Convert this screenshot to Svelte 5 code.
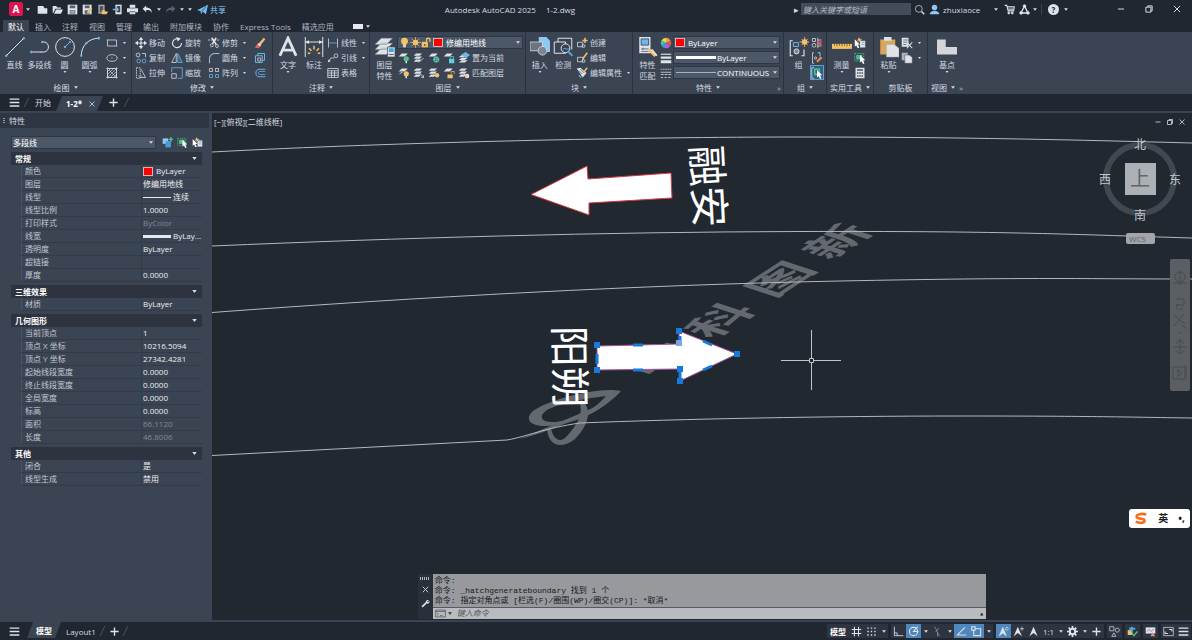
<script>
	const B = '#6cb8ea';
	const Y = '#f2c268';
	const G = '#4fc28b';
	const W = '#dfe3e8';

	const layers = `<path d="M1 7l4-3h8l-4 3zM1 10.500l4-3h8l-4 3zM1 14l4-3h8l-4 3z" fill="${W}" stroke="none"/>`;
	const sheet = `<path d="M1 6l4-4h8l-4 4z" fill="${W}" stroke="none"/>`;
	const sheets = `<path d="M1 5l3-3h8L9 5zM1 9l3-3h8L9 9zM1 13l3-3h7l-3 3z" fill="${W}" stroke="none"/>`;

	const icons = {
		new: `<path d="M1 3h8l2 3h4v8H1z" fill="${W}" stroke="none"/>`,
		open: `<path d="M1 3h5l2 2h5v2H5l-3 6H1z" fill="${W}" stroke="none"/><path d="M6 8h10l-3 6H3z" fill="${W}" stroke="none"/>`,
		save: `<path d="M1 1h14v14H1z" fill="${W}" stroke="none"/><path d="M4 2h8v4H4zM4 9h8v5H4z" fill="#56606e" stroke="none"/><path d="M5 11h6M5 13h6" stroke="${W}"/>`,
		saveas: `<path d="M1 1h13v14H1z" fill="${W}" stroke="none"/><path d="M4 2h7v4H4zM4 9h7v5H4z" fill="#56606e" stroke="none"/><path d="M8 13l6-7" stroke="${Y}" stroke-width="3"/>`,
		pageopen: `<path d="M2 1h9v13H2z" fill="#a9aeb6" stroke="none"/><path d="M4 3h5v9H4z" fill="#4c5663" stroke="none"/><path d="M7 9h4l1 2h4l-2 4H7z" fill="${Y}" stroke="none"/>`,
		mobile: `<path d="M5 1h9v14H5z" fill="${W}" stroke="none"/><path d="M7 3h5v9H7z" fill="#36404d" stroke="none"/><path d="M1 8h7M6 5l3 3-3 3" stroke="${B}" stroke-width="2"/>`,
		print: `<path d="M4 1h8v5H4zM0 6h16v6H0zM4 11h8v4H4z" fill="${W}" stroke="none"/><path d="M4 6h8M4 11h8" stroke="#3b4453"/><path d="M5 13h6" stroke="${B}"/>`,
		undo: `<path d="M6 2L1 7l5 5V9c4-1 7 0 8 4 1-5-3-8-8-8z" fill="${W}" stroke="none"/>`,
		redo: `<path d="M10 2l5 5-5 5V9c-4-1-7 0-8 4-1-5 3-8 8-8z" fill="#596371" stroke="none"/>`,
		plane: `<path d="M0 9L16 1l-3 14-5-4-2 4-1-5z" fill="#75bdf0" stroke="none"/><path d="M6 10l7-6-5 7" stroke="#2a6b9d"/>`,
		search: `<circle cx="7" cy="7" r="5"/><path d="M11 11l4 4" stroke-width="2"/>`,
		user: `<circle cx="8" cy="5" r="4" fill="#8fc6f5" stroke="none"/><path d="M1 15c0-7 14-7 14 0z" fill="#8fc6f5" stroke="none"/>`,
		cart: `<path d="M1 2h3l2 8h8l1-6H5" stroke-width="1.500"/><path d="M6 6h8M6 8h8"/><circle cx="7" cy="13" r="1.500" fill="${W}"/><circle cx="12" cy="13" r="1.500" fill="${W}"/>`,
		adesk: `<path d="M8 3L3 13h10z" stroke-width="2"/><circle cx="8" cy="3" r="2" fill="${W}"/><circle cx="3" cy="13" r="2" fill="${W}"/><circle cx="13" cy="13" r="2" fill="${W}"/>`,
		min: `<path d="M3 8h10" stroke-width="1.500"/>`,
		restore: `<path d="M3 5h8v8H3zM6 5V3h7v8h-2" stroke-width="1.500"/>`,
		close: `<path d="M3 3l10 10M13 3L3 13" stroke-width="1.500"/>`,
		menu: `<path d="M1 3h14M1 8h14M1 13h14" stroke-width="2"/>`,
		plus: `<path d="M8 2v12M2 8h12" stroke-width="2"/>`,
		line: `<path d="M1 15L15 1"/><circle cx="1" cy="15" r=".7" fill="${B}" stroke="${B}"/><circle cx="15" cy="1" r=".7" fill="${B}" stroke="${B}"/>`,
		pline: `<path d="M1 12h10c5 0 5-8 0-8H9"/><circle cx="1" cy="12" r=".7" fill="${B}" stroke="${B}"/><circle cx="9" cy="12" r=".5" fill="${B}" stroke="${B}"/><circle cx="10" cy="4" r=".5" fill="${B}" stroke="${B}"/>`,
		circle: `<circle cx="8" cy="8" r="7.500"/><path d="M8 8l4-4" stroke="${B}"/><circle cx="8" cy="8" r=".6" fill="${B}" stroke="${B}"/><circle cx="12" cy="4" r=".5" fill="${B}" stroke="${B}"/>`,
		arc: `<path d="M1 15C1 7 7 1 15 1"/><circle cx="15" cy="1" r=".8" fill="${B}" stroke="${B}"/><circle cx="5" cy="5" r=".6" fill="${B}" stroke="${B}"/><circle cx="1" cy="15" r=".6" fill="${B}" stroke="${B}"/>`,
		rect: `<path d="M2 4h12v8H2z"/><path d="M1 3h2v2H1zM13 11h2v2h-2z" fill="${B}" stroke="none"/>`,
		ellipse: `<ellipse cx="8" cy="8" rx="7" ry="4.500"/><circle cx="8" cy="8" r="1" fill="${B}" stroke="none"/>`,
		hatch: `<path d="M2 2h12v12H2z"/><path d="M0 2h16M0 14h16M2 0v16M14 0v16" stroke-width=".6"/><path d="M2 6l4-4M2 10l8-8M2 14L14 2M6 14l8-8M10 14l4-4M4 4l9 9" stroke-width=".8"/>`,
		move: `<path d="M8 1v14M1 8h14" stroke-width="1.500"/><path d="M8 0l3 4H5zM8 16l3-4H5zM0 8l4-3v6zM16 8l-4-3v6z" fill="${W}" stroke="none"/>`,
		rotate: `<path d="M11 3a6 6 0 1 0 3 5" stroke-width="1.500"/><path d="M7 0l6 2-4 4z" fill="${W}" stroke="none"/>`,
		trim: `<path d="M0 4h16" stroke-dasharray="3 1"/><path d="M5 1l6 9M11 1L6 9" stroke-width="2"/><circle cx="5" cy="11" r="2"/><circle cx="12" cy="12" r="2"/>`,
		erase: `<path d="M5 10L13 1l2 2-7 9z" fill="${Y}" stroke="none"/><path d="M1 14l4-5 4 3-3 3z" fill="#e9635f" stroke="none"/><path d="M5 9l4 3" stroke="${W}" stroke-width="2"/>`,
		copy: `<circle cx="4" cy="4" r="2.500"/><path d="M9 2h5v5"/><circle cx="5" cy="12" r="2.500" stroke="${B}"/><circle cx="12" cy="12" r="2.500" stroke="${B}"/>`,
		mirror: `<path d="M7 2v12H1z"/><path d="M9 2v12h6z" stroke="${B}" fill="#35627f"/>`,
		fillet: `<path d="M2 15V9c0-4 3-7 7-7h6"/><path d="M2 8c0-3 3-6 6-6" stroke="${B}"/>`,
		explode: `<path d="M2 5h9v9H2zM5 5V2h9v9h-3" stroke="${B}" stroke-width="1.300"/><path d="M5 8h4v4H5z"/>`,
		stretch: `<path d="M2 1h5v14H2z" stroke-dasharray="2 1"/><path d="M8 3l6 11H6"/><path d="M4 12h6" stroke="${B}"/>`,
		scale: `<path d="M1 7V1h14v14H9" stroke="${B}"/><path d="M1 9h6v6H1z"/>`,
		array: `<path d="M2 2h4v4H2zM10 2h4v4h-4z"/><path d="M2 10h4v4H2zM10 10h4v4h-4z" stroke="${B}"/>`,
		offset: `<path d="M15 3H7c-6 0-6 10 0 10h8" stroke="${B}" stroke-width="1.300"/><path d="M15 6H8c-3 0-3 4 0 4h7" stroke="${B}"/>`,
		text: `<path d="M1.500 15L8 1l6.500 14M4 10.500h8" stroke-width="2.300"/>`,
		dim: `<path d="M1 0v16M15 0v16M1 4h14" /><path d="M1 4l3-1.500v3zM15 4l-3-1.500v3z" fill="${W}" stroke="none"/><path d="M8 7v3M4 9l2 2M12 9l-2 2M3 13h2M13 13h-2" stroke="${Y}" stroke-width="1.200"/>`,
		linear: `<path d="M2 2v12M14 2v12"/><path d="M3 8h10" stroke="${B}"/>`,
		leader: `<path d="M2 13l3-5h5"/><circle cx="12" cy="5" r="2.500"/><path d="M1 14l4-2-3-2z" fill="${W}" stroke="none"/>`,
		table: `<path d="M1 2h14v12H1zM1 5h14M1 8h14M1 11h14M6 5v9M10 5v9"/>`,
		layerprops: `<path d="M0 6l5-5h9L9 6zM0 10l5-5h9l-5 5zM0 14l5-5h9l-5 5z" fill="${W}" stroke="#7d8795" stroke-width=".4"/><path d="M10 8h6v8h-6z" fill="${W}" stroke="#3b4453" stroke-width=".5"/><path d="M11 9h4v3h-4z" fill="#4aa7e3" stroke="none"/><path d="M11 14h4"  stroke="#5c6673"/>`,
		bulb: `<circle cx="8" cy="6" r="5" fill="${Y}" stroke="none"/><path d="M6 10h4v5H6z" fill="#e8d9b0" stroke="none"/>`,
		sun: `<circle cx="8" cy="8" r="4" fill="${Y}" stroke="none"/><path d="M8 0v16M0 8h16M2.500 2.500l11 11M13.500 2.500l-11 11" stroke="${Y}"/>`,
		lock: `<path d="M1 7h9v8H1z" fill="${Y}" stroke="none"/><path d="M8 7V4c0-3 5-3 5 0v3" stroke="${Y}" stroke-width="2"/><path d="M5.500 10v3" stroke="#4d3b12" stroke-width="1.500"/>`,
		loff: sheet + `<circle cx="11" cy="9" r="3.500" fill="${G}" stroke="none"/><path d="M10 12h2v3h-2z" fill="${W}" stroke="none"/>`,
		liso: sheets + `<path d="M8 14l6-6"/>`,
		lfreeze: sheet + `<circle cx="11" cy="10" r="3" stroke="${G}" stroke-width="2"/><path d="M7 10h8M11 6v8" stroke="${B}"/>`,
		llock: sheet + `<path d="M8 9h7v6H8z" fill="#5fd0d8" stroke="none"/><path d="M10 9V6h4v3" stroke="#5fd0d8"/>`,
		lcur: layers + `<path d="M4 4l6-4 6 4-5 4z" fill="${B}" stroke="none"/>`,
		lon: sheet + `<circle cx="11" cy="9" r="3.500" fill="${Y}" stroke="none"/><path d="M1 10l3-3h3M10 12h2v3h-2z" fill="${W}" stroke="none"/>`,
		luniso: sheets + `<path d="M9 8l5 6M11 14h3v-3"/>`,
		lthaw: sheets + `<circle cx="12" cy="11" r="3" fill="${Y}" stroke="none"/>`,
		lunlock: sheet + `<path d="M6 10h7v5H6z" fill="${Y}" stroke="none"/><path d="M11 9V6h4v3" stroke="${Y}"/>`,
		lmatch: sheets + `<circle cx="12" cy="12" r="3" fill="${W}" stroke="none"/><path d="M8 9l4 4" stroke="${Y}" stroke-width="2"/>`,
		insert: `<path d="M7 0h6l3 3v9H7z" fill="#8cc8f2" stroke="none"/><path d="M0 4h10v7H0z" fill="#6c7480" stroke="${W}" stroke-width=".6"/><circle cx="10" cy="11" r="3.500" fill="#7d8590" stroke="${W}" stroke-width=".6"/>`,
		detect: `<path d="M1 4h9v9H1zM4 4V1h11v9" stroke-width=".8"/><circle cx="10" cy="9" r="3.500" fill="#334455" stroke="${W}"/><path d="M8 10c2-2 3 1 5-1" stroke="${B}"/><path d="M12.500 12l3 3" stroke="#4aa7e3" stroke-width="1.500"/>`,
		bcreate: `<path d="M2 7h7v6H2z"/><circle cx="10" cy="12" r="2"/><path d="M12 1v7M8.500 4.500h7" stroke="${Y}" stroke-width="2"/>`,
		bedit: `<path d="M2 7h7v6H2z"/><circle cx="10" cy="12" r="2"/><path d="M9 9l6-8" stroke="${Y}" stroke-width="2"/>`,
		battr: `<path d="M1 2l5-1 8 7-5 6z" fill="${W}" stroke="none"/><path d="M4 5l4 4M6 3l5 5" stroke="#3b4453"/><path d="M10 7l5-6" stroke="${Y}" stroke-width="2"/><path d="M4 11l3 3" stroke="${G}" stroke-width="2"/>`,
		match: `<path d="M1 0h9v13H1z" fill="${W}" stroke="none"/><path d="M2.500 1.500h6v5h-6z" fill="#6cb8ea" stroke="#2d3642" stroke-width=".6"/><path d="M2.500 9.500h6M4 8.500v2M2.500 11.500h6" stroke="#5c6673" stroke-width=".7"/><path d="M8 9l3 1 4 4-2 2-4-4z" fill="${Y}" stroke="none"/><path d="M11 10l4 5" stroke="${W}" stroke-width="1.500"/>`,
		wheel: `<path d="M8 8V1a7 7 0 0 1 6 4z" fill="#f5a23c" stroke="none"/><path d="M8 8l6-3.500a7 7 0 0 1 0 7z" fill="#e25555" stroke="none"/><path d="M8 8l6 3.500A7 7 0 0 1 8 15z" fill="#b35fd0" stroke="none"/><path d="M8 8v7a7 7 0 0 1-6-3.500z" fill="#4b8df0" stroke="none"/><path d="M8 8l-6 3.500a7 7 0 0 1 0-7z" fill="#41c49c" stroke="none"/><path d="M8 8L2 4.500A7 7 0 0 1 8 1z" fill="#d7dc55" stroke="none"/>`,
		weights: `<path d="M1 3h14" stroke-width="1.500"/><path d="M1 7.500h14" stroke-width="3"/><path d="M1 13h14" stroke-width="4"/>`,
		dashes: `<path d="M1 3h14" stroke-dasharray="2 1"/><path d="M1 7h14"/><path d="M1 10h14" stroke-dasharray="4 1"/><path d="M1 14h14" stroke-dasharray="3 2"/>`,
		group: `<path d="M3 3H1v12h2M10 15h2v-5" stroke-width=".9"/><path d="M3.500 4.500h4v3h-4z" stroke="${B}"/><circle cx="6" cy="11.500" r="2" fill="#7d8590"/><circle cx="12.500" cy="4" r="2.200" fill="${Y}" stroke="none"/><path d="M12.500 0v8M8.500 4h8M10 1.500l5 5M15 1.500l-5 5" stroke="${Y}" stroke-width=".7"/>`,
		ungroup: `<path d="M2 2h4v4H2z"/><circle cx="4" cy="11" r="2.500"/><path d="M9 1v14M9 4h5M9 12h5"/><path d="M9 6l5 5M14 6l-5 5" stroke="#ee5a52" stroke-width="2"/>`,
		gedit: `<path d="M4 1H2v14h2M9 1h3v5"/><circle cx="6" cy="8" r="1.500"/><path d="M8 13l6-6" stroke="#ef8b50" stroke-width="3"/>`,
		gselect: `<path d="M4 1H1v14h3" stroke="${W}"/><path d="M5 3h6v7H5z" stroke="${G}" stroke-width="2"/><path d="M8 4v10l2-2 2 4 2-1-2-4h3z" fill="#fff" stroke="none"/>`,
		ruler: `<path d="M0 5.500h16v4H0z" fill="${Y}" stroke="none"/><path d="M2 5.500v1.500M4 5.500v2M6 5.500v1.500M8 5.500v2M10 5.500v1.500M12 5.500v2M14 5.500v1.500" stroke="#7a5a1c" stroke-width=".7"/>`,
		quick: `<path d="M8 5h7v9H8z" fill="${W}" stroke="none"/><path d="M10 7h4M10 10h4" stroke="#4aa7e3"/><path d="M1 3v10l2-2 2 4 2-1-2-4h3z" fill="#fff" stroke="none"/><path d="M7 0L4 5h3L5 8l6-5H8z" fill="${Y}" stroke="none"/>`,
		selall: `<path d="M1 2h12v10H1z" stroke="${G}" stroke-dasharray="2 1"/><path d="M3 4h8v6H3z" fill="${G}" stroke="none"/><path d="M8 4v10l2-2 2 4 2-1-2-4h3z" fill="#fff" stroke="none"/>`,
		calc: `<path d="M2 1h12v14H2z" fill="${W}" stroke="none"/><path d="M4 3h8v2H4zM4 7h2v2H4zM7 7h2v2H7zM10 7h2v2h-2zM4 11h2v2H4zM7 11h2v2H7zM10 11h2v2h-2z" fill="#4c5663" stroke="none"/>`,
		paste: `<path d="M1 2h12v12H1z" fill="#d9a65a" stroke="none"/><path d="M4 0h6v3H4z" fill="${W}" stroke="none"/><path d="M6 6h6l4 3v7H6z" fill="${W}" stroke="#aab0b8" stroke-width=".4"/>`,
		cut: `<path d="M1 1h9v12H1z" fill="${W}" stroke="none"/><path d="M3 4h6M3 7h6M3 10h4" stroke="#4c5663"/><path d="M8 7l7 8M15 7l-7 8" stroke="${W}" stroke-width="1.500"/>`,
		copyclip: `<path d="M1 1h8v10H1z" fill="#aeb4bd" stroke="none"/><path d="M5 4h6l4 3v8H5z" fill="${W}" stroke="#3b4453" stroke-width=".6"/>`,
		base: `<path d="M0 2h7v6h9v6H0z" fill="#d3d5d8" stroke="none"/>`,
		pickadd: `<path d="M1 2h8v8H1z" fill="#8cc8f2" stroke="none"/><path d="M5 6h8v9H5z" fill="#4a9bd8" stroke="none"/><path d="M13 0v7M9.500 3.500h7" stroke="${G}" stroke-width="2"/>`,
		terminal: `<path d="M1 3h14v10H1zM1 5h14M3 7l2 2-2 2M7 11h4" stroke="#444a52"/>`,
		wrench: `<path d="M2 14l7-7" stroke="${W}" stroke-width="3"/><path d="M9 8c-2-4 1-7 5-6l-3 3 1 1 3-3c1 4-2 6-6 5z" fill="${W}" stroke="none"/>`,
		grid: `<path d="M5 1v14M11 1v14M1 5h14M1 11h14" stroke-width="1.500"/>`,
		dots: `<path d="M2 3h13M2 8h13M2 13h13" stroke-dasharray="2 3" stroke-width="2"/>`,
		ortho: `<path d="M2 1v13h13M2 10h4v4" stroke-width="1.200"/>`,
		polar: `<circle cx="8" cy="8" r="6" stroke-width="1.500"/><path d="M15 8H8l6-7" stroke-width="1.500"/>`,
		iso: `<path d="M4 1l7 14M10 3L5 9M8 9v6" stroke="#98a1ad"/>`,
		track: `<path d="M2 13L13 2M1 13h14" stroke-width="1.500"/>`,
		snap: `<path d="M4 4h10v10H4z" stroke-width="1.500"/><path d="M1 1h5v5H1z" fill="#4f8cc4" stroke-width="1.500"/>`,
		ann1: `<path d="M2 14L7 2l5 12-5-4z" fill="${W}" stroke="${W}"/><circle cx="13" cy="4" r="2"/>`,
		ann2: `<path d="M1 15L7 1l6 14-6-5z" fill="${W}" stroke="none"/><path d="M13 1v6M10 4h6"/>`,
		ann3: `<path d="M2 15L8 1l6 14-6-5z" fill="${W}" stroke="none"/>`,
		gear: `<circle cx="8" cy="8" r="4" stroke-width="3"/><path d="M8 0v3M8 13v3M0 8h3M13 8h3M2.500 2.500l2 2M11.500 11.500l2 2M13.500 2.500l-2 2M4.500 11.500l-2 2" stroke-width="2.500"/>`,
		shapes: `<path d="M1 1h6v6H1zM4 15l3-5 3 5z"/><circle cx="12" cy="6" r="3"/>`,
		perf: `<path d="M1 6h7v7H1z" fill="${Y}" stroke="none"/><path d="M7 1v8M3 4h9" stroke="#4aa7e3" stroke-width="3"/><path d="M8 11l2 3 5-6" stroke="${G}" stroke-width="2"/>`,
		graph: `<path d="M1 2h14v9H1z" fill="${W}" stroke="none"/><path d="M3 8l3-3 3 3 4-4" stroke="#5c6673"/><path d="M8 15l3-6 4 6z" fill="#ef8b70" stroke="none"/>`,
		full: `<path d="M1 2h14v12H1z"/><path d="M9 5h4v3M7 11H3V8" stroke-width="1.500"/>`
	};

	const quickAccess = ['new', 'open', 'save', 'saveas', 'pageopen', 'mobile', 'print', 'undo'];
	const ribbonTabs = ['默认', '插入', '注释', '视图', '管理', '输出', '附加模块', '协作', 'Express Tools', '精选应用'];

	const sections = [
		{
			title: '常规',
			rows: [
				{ label: '颜色', value: 'ByLayer', mark: 'swatch' },
				{ label: '图层', value: '修编用地线' },
				{ label: '线型', value: '连续', mark: 'thin' },
				{ label: '线型比例', value: '1.0000' },
				{ label: '打印样式', value: 'ByColor', dim: true },
				{ label: '线宽', value: 'ByLay...', mark: 'thick' },
				{ label: '透明度', value: 'ByLayer' },
				{ label: '超链接', value: '' },
				{ label: '厚度', value: '0.0000' }
			]
		},
		{ title: '三维效果', rows: [{ label: '材质', value: 'ByLayer' }] },
		{
			title: '几何图形',
			rows: [
				{ label: '当前顶点', value: '1' },
				{ label: '顶点 X 坐标', value: '10216.5094' },
				{ label: '顶点 Y 坐标', value: '27342.4281' },
				{ label: '起始线段宽度', value: '0.0000' },
				{ label: '终止线段宽度', value: '0.0000' },
				{ label: '全局宽度', value: '0.0000' },
				{ label: '标高', value: '0.0000' },
				{ label: '面积', value: '66.1120', dim: true },
				{ label: '长度', value: '46.8006', dim: true }
			]
		},
		{
			title: '其他',
			rows: [
				{ label: '闭合', value: '是' },
				{ label: '线型生成', value: '禁用' }
			]
		}
	];

	const watermark = [
		{ char: '中', x: 660, y: 359 },
		{ char: '科', x: 720, y: 320 },
		{ char: '图', x: 780, y: 279 },
		{ char: '新', x: 837, y: 241 }
	];

	const grips = [
		[597, 345], [679, 331], [737, 354], [680, 369], [680, 381], [597, 370]
	];

	const statusItems = [
		{ icon: 'grid' },
		{ icon: 'dots', caret: true },
		{ icon: 'ortho', gap: true },
		{ icon: 'polar', on: true, caret: true },
		{ icon: 'iso', caret: true },
		{ icon: 'track', on: true },
		{ icon: 'snap', on: true, caret: true },
		{ icon: 'ann1', on: true, gap: true },
		{ icon: 'ann2' },
		{ icon: 'ann3' },
		{ text: '1:1', caret: true },
		{ icon: 'gear', caret: true },
		{ icon: 'plus' },
		{ icon: 'shapes', gap: true },
		{ icon: 'perf', gap: true },
		{ icon: 'graph', gap: true },
		{ icon: 'full', gap: true },
		{ icon: 'menu' }
	];

	let activeTab = $state('默认');
	let keyword = $state('');
	let command = $state('');
</script>

{#snippet icon(name)}
	<svg class="icon" viewBox="0 0 16 16" aria-hidden="true">{@html icons[name]}</svg>
{/snippet}

{#snippet caret()}
	<svg class="caret" viewBox="0 0 6 4" aria-hidden="true"><path d="M0 0h6L3 4z" /></svg>
{/snippet}

{#snippet big(name, lines, more)}
	<button class="big">
		{@render icon(name)}
		{#each lines as line}<span>{line}</span>{/each}
		{#if more}{@render caret()}{/if}
	</button>
{/snippet}

{#snippet small(name, label, more)}
	<button class="small" aria-label={label || name}>
		{@render icon(name)}
		{#if label}<span>{label}</span>{/if}
		{#if more}{@render caret()}{/if}
	</button>
{/snippet}

{#snippet panelTitle(label, more, launcher)}
	<div class="panel-title">
		<span>{label}</span>
		{#if more}{@render caret()}{/if}
		{#if launcher}<span class="launcher">»</span>{/if}
	</div>
{/snippet}

<div class="app">
	<header class="titlebar">
		<button class="logo" aria-label="菜单">A</button>
		<span class="after-logo">{@render caret()}</span>
		<div class="quick">
			{#each quickAccess as name}
				<button aria-label={name}>{@render icon(name)}</button>
			{/each}
			{@render caret()}
			<button aria-label="redo">{@render icon('redo')}</button>
			{@render caret()}
			{@render caret()}
		</div>
		<button class="share">{@render icon('plane')}<span>共享</span></button>
		<h1><span>Autodesk AutoCAD 2025</span><span>1-2.dwg</span></h1>
		<span class="arrow">▸</span>
		<input class="search" type="text" aria-label="搜索" placeholder="键入关键字或短语" bind:value={keyword} />
		<button class="search-btn" aria-label="搜索按钮">{@render icon('search')}</button>
		<button class="user">{@render icon('user')}<span>zhuxiaoce</span>{@render caret()}</button>
		<button class="tool" aria-label="商店">{@render icon('cart')}</button>
		<button class="tool" aria-label="Autodesk">{@render icon('adesk')}{@render caret()}</button>
		<button class="help" aria-label="帮助"><b>?</b>{@render caret()}</button>
		<div class="window-controls">
			<button aria-label="最小化">{@render icon('min')}</button>
			<button aria-label="还原">{@render icon('restore')}</button>
			<button aria-label="关闭">{@render icon('close')}</button>
		</div>
	</header>

	<nav class="tabs">
		{#each ribbonTabs as tab}
			<button class:active={tab === activeTab} onclick={() => (activeTab = tab)}>{tab}</button>
		{/each}
		<button class="collapse" aria-label="最小化功能区"><i></i>{@render caret()}</button>
	</nav>

	<div class="ribbon">
		<section class="panel draw">
			<div class="panel-body">
				{@render big('line', ['直线'])}
				{@render big('pline', ['多段线'])}
				{@render big('circle', ['圆'], true)}
				{@render big('arc', ['圆弧'], true)}
				<div class="stack">
					{@render small('rect', '', true)}
					{@render small('ellipse', '', true)}
					{@render small('hatch', '', true)}
				</div>
			</div>
			{@render panelTitle('绘图', true)}
		</section>

		<section class="panel modify">
			<div class="panel-body">
				<div class="grid">
					{@render small('move', '移动')}
					{@render small('rotate', '旋转')}
					{@render small('trim', '修剪', true)}
					{@render small('erase')}
					{@render small('copy', '复制')}
					{@render small('mirror', '镜像')}
					{@render small('fillet', '圆角', true)}
					{@render small('explode')}
					{@render small('stretch', '拉伸')}
					{@render small('scale', '缩放')}
					{@render small('array', '阵列', true)}
					{@render small('offset')}
				</div>
			</div>
			{@render panelTitle('修改', true)}
		</section>

		<section class="panel annotate">
			<div class="panel-body">
				{@render big('text', ['文字'], true)}
				{@render big('dim', ['标注'])}
				<div class="stack">
					{@render small('linear', '线性', true)}
					{@render small('leader', '引线', true)}
					{@render small('table', '表格')}
				</div>
			</div>
			{@render panelTitle('注释', true)}
		</section>

		<section class="panel layer">
			<div class="panel-body">
				{@render big('layerprops', ['图层', '特性'])}
				<div class="stack fill">
					<div class="combo">
						{@render icon('bulb')}
						{@render icon('sun')}
						{@render icon('lock')}
						<i class="swatch"></i>
						<select aria-label="图层"><option>修编用地线</option></select>
						{@render caret()}
					</div>
					<div class="row">
						{#each ['loff', 'liso', 'lfreeze', 'llock'] as name}{@render small(name)}{/each}
						{@render small('lcur', '置为当前')}
					</div>
					<div class="row">
						{#each ['lon', 'luniso', 'lthaw', 'lunlock'] as name}{@render small(name)}{/each}
						{@render small('lmatch', '匹配图层')}
					</div>
				</div>
			</div>
			{@render panelTitle('图层', true)}
		</section>

		<section class="panel block">
			<div class="panel-body">
				{@render big('insert', ['插入'], true)}
				{@render big('detect', ['检测'])}
				<div class="stack">
					{@render small('bcreate', '创建')}
					{@render small('bedit', '编辑')}
					{@render small('battr', '编辑属性', true)}
				</div>
			</div>
			{@render panelTitle('块', true)}
		</section>

		<section class="panel props">
			<div class="panel-body">
				{@render big('match', ['特性', '匹配'])}
				<div class="stack">
					{@render small('wheel')}
					{@render small('weights')}
					{@render small('dashes')}
				</div>
				<div class="stack fill">
					<div class="combo">
						<i class="swatch"></i>
						<select aria-label="对象颜色"><option>ByLayer</option></select>
						{@render caret()}
					</div>
					<div class="combo">
						<i class="weight"></i>
						<select aria-label="线宽"><option>ByLayer</option></select>
						{@render caret()}
					</div>
					<div class="combo">
						<i class="weight thin"></i>
						<select aria-label="线型"><option>CONTINUOUS</option></select>
						{@render caret()}
					</div>
				</div>
			</div>
			{@render panelTitle('特性', true, true)}
		</section>

		<section class="panel groups">
			<div class="panel-body">
				{@render big('group', ['组'])}
				<div class="stack">
					{@render small('ungroup')}
					{@render small('gedit')}
					<div class="pressed">{@render small('gselect')}</div>
				</div>
			</div>
			{@render panelTitle('组', true)}
		</section>

		<section class="panel utils">
			<div class="panel-body">
				{@render big('ruler', ['测量'], true)}
				<div class="stack">
					{@render small('quick')}
					{@render small('selall')}
					{@render small('calc')}
				</div>
			</div>
			{@render panelTitle('实用工具', true)}
		</section>

		<section class="panel clip">
			<div class="panel-body">
				{@render big('paste', ['粘贴'], true)}
				<div class="stack">
					{@render small('cut', '', true)}
					{@render small('copyclip', '', true)}
				</div>
			</div>
			{@render panelTitle('剪贴板')}
		</section>

		<section class="panel view">
			<div class="panel-body">
				{@render big('base', ['基点'], true)}
			</div>
			{@render panelTitle('视图', true, true)}
		</section>
	</div>

	<nav class="files">
		<button class="burger" aria-label="文件菜单">{@render icon('menu')}</button>
		<i class="slash"></i>
		<button class="plain">开始</button>
		<button class="sheet-tab"><b>1-2*</b>{@render icon('close')}</button>
		<button class="add" aria-label="新图形">{@render icon('plus')}</button>
		<i class="slash"></i>
	</nav>

	<main>
		<aside>
			<h2><i class="grip"></i>特性</h2>
			<div class="selection">
				<div class="combo">
					<select aria-label="选择对象"><option>多段线</option></select>
					{@render caret()}
				</div>
				<button aria-label="切换 PICKADD">{@render icon('pickadd')}</button>
				<button aria-label="选择对象按钮">{@render icon('selall')}</button>
				<button aria-label="快速选择">{@render icon('quick')}</button>
			</div>
			{#each sections as section}
				<div class="section">
					<h3>{section.title}{@render caret()}</h3>
					<table>
						<tbody>
							{#each section.rows as row}
								<tr>
									<th scope="row">{row.label}</th>
									<td class:dim={row.dim}>
										<div>
											{#if row.mark}<i class={row.mark}></i>{/if}{row.value}
										</div>
									</td>
								</tr>
							{/each}
						</tbody>
					</table>
				</div>
			{/each}
		</aside>

		<div class="canvas">
			<svg class="drawing" viewBox="212 113 980 507" preserveAspectRatio="xMinYMin slice">
				<g class="mark">
					{#each watermark as mark}
						<text text-anchor="middle" y="16" transform="translate({mark.x} {mark.y}) rotate(-72) skewY(39)">{mark.char}</text>
					{/each}
					<path
						fill-rule="evenodd"
						d="M621 391C598 386 548 400 533 411C524 419 530 427 548 426C578 424 606 408 621 391ZM606 396C588 398 560 403 547 410C537 417 542 423 556 422C578 419 596 408 606 396Z"
					/>
					<path d="M582 400C593 410 588 426 575 439C561 450 548 446 547 428L551 428C553 439 560 444 567 436C578 424 584 412 579 401Z" />
					<path d="M520 439C550 426 585 412 612 399C590 414 555 430 520 439Z" />
				</g>

				<g class="roads">
					<path d="M212 152C400 142 640 137 800 137S1080 140 1192 143" />
					<path d="M212 246C400 238 600 232 800 231.500S1060 234 1192 238" />
					<path d="M212 312.500C420 297 640 285 840 281S1080 279 1192 279" />
					<path d="M212 455.500L507 440C525 437 545 428 580 423C680 419 830 416 960 416S1120 417 1192 418" />
				</g>

				<polygon class="arrow-left" points="531,194.500 587,166 588,179 671,173 672,198 589,203 589,215" />
				<polygon class="arrow-right" points="597,346 679,344 679,331 737,354 680,381 680,369 597,370" />
				<g class="mid-grips">
					<path d="M633 345h10M633 370h10M703 341l9 4M703 370l9-4M597 354v10M680 336v6M680 372v6" />
				</g>
				<g class="grips">
					{#each grips as [x, y]}
						<rect x={x - 3} y={y - 3} width="6" height="6" />
					{/each}
					<rect class="soft" x="676" y="340" width="6" height="6" />
				</g>

				<text class="place" transform="translate(691 146) rotate(87)">融安</text>
				<text class="place" transform="translate(554 326) rotate(89)">阳朔</text>

				<path class="crosshair" d="M811.500 330v28M811.500 363v27M781 360.500h28M814 360.500h27M809.500 358.500h4v4h-4z" />
			</svg>

			<p class="viewport-label">[−][俯视][二维线框]</p>

			<div class="doc-controls">
				<button aria-label="最小化视口">{@render icon('min')}</button>
				<button aria-label="还原视口">{@render icon('restore')}</button>
				<button aria-label="关闭视口">{@render icon('close')}</button>
			</div>

			<svg class="cube" viewBox="0 0 90 90">
				<circle cx="45" cy="45" r="34" />
				<rect x="30" y="29" width="31" height="32" />
				<text class="top" x="45" y="52">上</text>
				<text x="45" y="15">北</text>
				<text x="10" y="50">西</text>
				<text x="80" y="50">东</text>
				<text x="45" y="86">南</text>
			</svg>
			<button class="wcs">WCS</button>

			<div class="navbar">
				<svg viewBox="0 0 20 132" aria-hidden="true">
					<circle cx="10" cy="18" r="5" /><path d="M4 24h12M10 12v14" />
					<path d="M5 40h9v6H6M13 49c-6 5-8-2-5-4M4 56l11 9M14 55L4 67M12 66l5 4M9 74h2" />
					<path d="M4 88h12M10 80v14M10 80l-4 5M10 80l4 5M6 92l4 3 4-3" />
					<path d="M3 108h12v12H3zM8 110l4 4-4 4zM16 106v14" />
				</svg>
			</div>

			<div class="command">
				<div class="command-side">
					<i class="grip"></i>
					<button aria-label="关闭命令行">{@render icon('close')}</button>
					<button aria-label="自定义">{@render icon('wrench')}</button>
				</div>
				<div class="command-main">
					<div class="history">
						<p>命令:</p>
						<p>命令:</p>
						<p>命令: _hatchgenerateboundary 找到 1 个</p>
						<p>命令: 指定对角点或 [栏选(F)/圈围(WP)/圈交(CP)]: *取消*</p>
					</div>
					<div class="prompt">
						{@render icon('terminal')}
						{@render caret()}
						<input type="text" aria-label="命令" placeholder="键入命令" bind:value={command} />
						<span class="up">▴</span>
					</div>
				</div>
			</div>

			<div class="ime">
				<svg viewBox="0 0 16 16" aria-hidden="true">
					<path d="M14 3C8 1 3 3 3 5.500 3 9 12 6 12 10c0 3-6 3-10 1" />
				</svg>
				<b>英</b>
				<b>•,</b>
			</div>
		</div>
	</main>

	<footer>
		<button class="burger" aria-label="布局菜单">{@render icon('menu')}</button>
		<button class="sheet-tab model"><b>模型</b></button>
		<button class="plain">Layout1</button>
		<i class="slash"></i>
		<button class="add" aria-label="新建布局">{@render icon('plus')}</button>
		<i class="slash"></i>
		<div class="status">
			<button class="model-space"><b>模型</b></button>
			{#each statusItems as item}
				<button class="status-item" class:on={item.on} class:gap={item.gap} aria-label={item.text || item.icon}>
					{#if item.text}{item.text}{:else}{@render icon(item.icon)}{/if}
				</button>
				{#if item.caret}<span class="status-caret">{@render caret()}</span>{/if}
			{/each}
		</div>
	</footer>
</div>

<style>
	:global(body) {
		background: #212830;
	}

	.app {
		--bar: #202731;
		--panel: #3b4453;
		--text: #d5dae1;
		display: flex;
		flex-direction: column;
		height: 100vh;
		min-height: 560px;
		overflow: hidden;
		background: var(--bar);
		color: var(--text);
		font: 8px/11px 'Open Sans', 'Noto Sans CJK SC', sans-serif;
	}

	button,
	input,
	select {
		margin: 0;
		padding: 0;
		border: 0;
		border-radius: 0;
		outline: 0;
		background: none;
		color: inherit;
		font: inherit;
	}

	button {
		display: flex;
		align-items: center;
		white-space: nowrap;
	}

	h1,
	h2,
	h3,
	p {
		margin: 0;
		font-size: 8px;
		font-weight: 400;
	}

	.icon {
		flex: none;
		width: 11px;
		height: 11px;
		fill: none;
		stroke: #dfe3e8;
	}

	.caret {
		flex: none;
		width: 4px;
		height: 3px;
		fill: #d5dae1;
	}

	/* title bar */
	.titlebar {
		display: flex;
		align-items: center;
		flex: none;
		height: 18px;
		padding-left: 9px;
	}

	.logo {
		justify-content: center;
		width: 14px;
		height: 14px;
		border-radius: 2px;
		background: #dc1450;
		color: #fff;
		font-size: 10px;
		font-weight: 700;
	}

	.after-logo {
		display: flex;
		width: 11px;
		padding-left: 3px;
	}

	.quick {
		display: flex;
		align-items: center;
		gap: 4px;
	}

	.share {
		gap: 2px;
		margin-left: 5px;
		color: #8cc8f2;
	}

	h1 {
		display: flex;
		flex: 1;
		justify-content: center;
		gap: 10px;
		white-space: nowrap;
	}

	.arrow {
		width: 7px;
		font-size: 9px;
	}

	.search {
		width: 110px;
		height: 12px;
		box-sizing: border-box;
		padding: 0 2px;
		background: #434c5b;
	}

	input::placeholder {
		color: #b3bac4;
		font-style: italic;
		opacity: 1;
	}

	.search-btn {
		margin: 0 4px 0 3px;
	}

	.user {
		gap: 3px;
		width: 75px;
	}

	.user .caret {
		margin-left: auto;
		margin-right: 6px;
	}

	.tool {
		gap: 3px;
		margin-right: 4px;
	}

	.help {
		gap: 5px;
		padding-left: 6px;
		border-left: 1px solid #3b4453;
	}

	.help b {
		width: 11px;
		height: 11px;
		border-radius: 50%;
		background: #dfe3e8;
		color: #202731;
	}

	.window-controls {
		display: flex;
		gap: 18px;
		margin-left: 48px;
		padding-right: 10px;
	}

	.window-controls .icon {
		width: 10px;
		height: 10px;
	}

	/* ribbon tabs */
	.tabs {
		display: flex;
		align-items: flex-end;
		gap: 1px;
		flex: none;
		height: 14px;
		padding-left: 3px;
	}

	.tabs button {
		height: 12px;
		padding: 0 5px;
		color: #aeb5c0;
	}

	.tabs .active {
		background: var(--panel);
		color: #fff;
	}

	.tabs .collapse {
		gap: 3px;
		margin-left: 8px;
	}

	.collapse i {
		width: 10px;
		height: 5px;
		background: #e6e8eb;
	}

	/* ribbon */
	.ribbon {
		display: flex;
		flex: none;
		height: 62px;
		background: var(--panel);
	}

	.panel {
		display: flex;
		flex-direction: column;
		box-sizing: border-box;
		border-right: 1px solid #2b323e;
	}

	.panel-body {
		display: flex;
		flex: none;
		height: 46px;
		padding: 3px 2px 0;
	}

	.panel-title {
		display: flex;
		align-items: center;
		justify-content: center;
		gap: 4px;
		height: 13px;
		white-space: nowrap;
	}

	.draw { width: 132px; }
	.modify { width: 141px; }
	.annotate { width: 97px; }
	.layer { width: 156px; }
	.block { width: 107px; }
	.props { width: 151px; }
	.groups { width: 43px; }
	.utils { width: 47px; }
	.clip { width: 54px; }

	.view {
		width: 38px;
		border-right: 0;
	}

	.launcher {
		color: #aeb5c0;
	}

	.props .panel-title {
		position: relative;
	}

	.props .launcher {
		position: absolute;
		right: 2px;
	}

	.big {
		flex-direction: column;
		align-items: center;
		width: 25px;
		height: 46px;
	}

	.big .icon {
		width: 20px;
		height: 22px;
		margin: 1px 0;
		stroke-width: 0.8;
	}

	.annotate .big {
		width: 26px;
	}

	.view .big {
		width: 34px;
	}

	.stack {
		display: flex;
		flex-direction: column;
	}

	.fill {
		flex: 1;
		min-width: 0;
	}

	.small {
		gap: 2px;
		height: 15px;
	}

	.small .icon {
		width: 12px;
		height: 12px;
	}

	.small .caret {
		margin-left: 3px;
		width: 3px;
		height: 2px;
	}

	.big .caret {
		width: 4px;
		height: 2px;
		margin-top: 1px;
	}

	.draw .stack {
		margin-left: 4px;
	}

	.grid {
		display: grid;
		grid-template-columns: 36px 37px 46px 14px;
		grid-auto-rows: 15px;
		padding-left: 1px;
	}

	.row {
		display: flex;
		gap: 3px;
		padding-left: 1px;
	}

	.combo {
		display: flex;
		align-items: center;
		box-sizing: border-box;
		height: 13px;
		margin: 1px 0;
		padding: 0 2px 0 1px;
		background: #4c5768;
		border: 1px solid #2f3744;
		color: #fff;
	}

	.combo select {
		flex: 1;
		min-width: 0;
		appearance: none;
	}

	.combo option {
		color: #222;
	}

	.swatch {
		flex: none;
		box-sizing: border-box;
		width: 10px;
		height: 9px;
		margin-right: 3px;
		border: 1px solid #d7b4b4;
		background: #f00;
	}

	.layer .swatch {
		margin-left: 1px;
	}

	.weight {
		width: 40px;
		height: 3px;
		margin: 0 1px;
		background: #fff;
	}

	.weight.thin {
		height: 1px;
		background: #aab1bb;
	}

	.block .stack {
		margin-left: 1px;
	}

	.props .stack {
		margin-right: 1px;
	}

	.pressed {
		margin: 0 -1px;
		padding: 0 1px;
		background: #35627f;
		box-shadow: inset 0 0 0 1px #5b9fd0;
	}

	/* document tabs */
	.files,
	footer {
		display: flex;
		align-items: stretch;
		flex: none;
	}

	.files {
		height: 17px;
		border-bottom: 2px solid var(--panel);
	}

	.burger {
		padding: 0 3px 0 9px;
	}

	.slash {
		width: 1px;
		margin: 4px 3px;
		background: #4a5361;
		transform: skewX(-25deg);
	}

	.plain {
		padding: 0 5px;
	}

	.sheet-tab {
		gap: 6px;
		padding: 0 7px 0 10px;
		background: var(--panel);
		clip-path: polygon(6px 0, 100% 0, calc(100% - 6px) 100%, 0 100%);
		color: #fff;
	}

	.sheet-tab .icon {
		width: 8px;
		height: 8px;
	}

	.files .sheet-tab {
		margin-top: 2px;
	}

	.add {
		padding: 0 4px 0 5px;
	}

	/* work area */
	main {
		display: flex;
		flex: 1;
		min-height: 0;
	}

	aside {
		flex: none;
		width: 212px;
		background: var(--panel);
	}

	h2 {
		display: flex;
		align-items: center;
		gap: 4px;
		height: 15px;
		margin: 0 3px 8px 0;
		padding-left: 3px;
		background: #2f3643;
	}

	.grip {
		width: 2px;
		height: 6px;
		background: repeating-linear-gradient(#8f98a5 0 1px, transparent 1px 2px);
	}

	.selection {
		display: flex;
		align-items: center;
		gap: 4px;
		height: 13px;
		margin: 0 9px 3px 11px;
	}

	.selection .combo {
		flex: 1;
		margin-right: 2px;
	}

	.section {
		margin: 0 10px 3px 11px;
	}

	h3 {
		display: flex;
		align-items: center;
		justify-content: space-between;
		height: 13px;
		padding: 0 5px 0 4px;
		background: #2d333f;
		color: #fff;
		font-weight: 700;
	}

	h3 .caret {
		width: 5px;
	}

	table {
		width: calc(100% - 10px);
		margin-left: 10px;
		border-collapse: collapse;
		table-layout: fixed;
		border-left: 1px solid #4a5362;
	}

	th,
	td {
		height: 12px;
		padding: 0 0 0 3px;
		border-bottom: 1px solid #333b48;
		line-height: 12px;
		text-align: left;
		font-weight: 400;
	}

	th {
		width: 116px;
		color: #c3c9d2;
	}

	td {
		padding-left: 1px;
		border-left: 1px solid #333b48;
		color: #eceef1;
	}

	td div {
		display: flex;
		align-items: center;
		height: 12px;
		white-space: nowrap;
	}

	td.dim {
		color: #7f8896;
	}

	td .thin,
	td .thick {
		width: 28px;
		height: 1px;
		margin-right: 2px;
		background: #e6e9ed;
	}

	td .thick {
		height: 3px;
	}

	/* drawing */
	.canvas {
		position: relative;
		flex: 1;
		min-width: 0;
		overflow: hidden;
		background: #212830;
	}

	.drawing {
		display: block;
		width: 100%;
		height: 100%;
	}

	.mark {
		fill: #64696f;
		font: 700 43px 'Noto Sans CJK SC', sans-serif;
	}

	.roads {
		fill: none;
		stroke: #b4b8bc;
	}

	.arrow-left {
		fill: #fff;
		stroke: #d8383c;
	}

	.arrow-right {
		fill: #fff;
		stroke: #a34f9c;
	}

	.grips rect {
		fill: #1679dc;
	}

	.grips .soft {
		fill: #78a6dc;
	}

	.mid-grips {
		stroke: #1679dc;
		stroke-width: 3;
	}

	.place {
		fill: #fff;
		font: 400 41px 'Noto Sans CJK SC', sans-serif;
	}

	.crosshair {
		fill: none;
		stroke: #c2c5c8;
	}

	.viewport-label {
		position: absolute;
		top: 3px;
		left: 2px;
	}

	.doc-controls {
		position: absolute;
		top: 5px;
		right: 6px;
		display: flex;
		gap: 4px;
	}

	.doc-controls .icon {
		width: 8px;
		height: 8px;
		stroke-width: 2;
	}

	.cube {
		position: absolute;
		top: 21px;
		right: 7px;
		width: 90px;
		height: 90px;
		fill: #c3c6c9;
		font: 12px 'Noto Sans CJK SC', sans-serif;
		text-anchor: middle;
	}

	.cube circle {
		fill: none;
		stroke: #404850;
		stroke-width: 6;
	}

	.cube rect {
		fill: #adb0b5;
	}

	.cube .top {
		fill: #60656c;
		font-size: 20px;
	}

	.wcs {
		position: absolute;
		top: 120px;
		right: 37px;
		width: 29px;
		height: 11px;
		padding-left: 3px;
		border-radius: 2px;
		background: #a2a5aa;
		color: #5e636a;
	}

	.navbar {
		position: absolute;
		top: 146px;
		right: 2px;
		width: 20px;
		height: 132px;
		border-radius: 2px;
		background: #5b5e63;
	}

	.navbar svg {
		fill: none;
		stroke: #484c52;
	}

	.command {
		position: absolute;
		bottom: 1px;
		left: 21%;
		display: flex;
		width: 58%;
		height: 45px;
	}

	.command-side {
		display: flex;
		flex-direction: column;
		align-items: center;
		gap: 5px;
		width: 15px;
		padding-top: 3px;
		background: #29303a;
	}

	.command-side .grip {
		width: 10px;
		height: 3px;
		background: repeating-linear-gradient(90deg, #b4b8bc 0 1px, transparent 1px 2px);
	}

	.command-side .icon {
		width: 9px;
		height: 9px;
	}

	.command-main {
		display: flex;
		flex: 1;
		flex-direction: column;
		min-width: 0;
		color: #16191d;
		font-family: 'Liberation Mono', 'Noto Sans CJK SC', monospace;
	}

	.history {
		display: flex;
		flex: 1;
		flex-direction: column;
		justify-content: flex-end;
		min-height: 0;
		overflow: hidden;
		padding: 0 2px 1px;
		background: #97999c;
		border-bottom: 1px solid #555a60;
	}

	.history p {
		flex: none;
		line-height: 10px;
		white-space: nowrap;
	}

	.prompt {
		display: flex;
		align-items: center;
		gap: 2px;
		height: 11px;
		padding: 0 2px;
		background: #b9bcbe;
	}

	.prompt .caret {
		fill: #333;
	}

	.prompt input {
		flex: 1;
		min-width: 0;
		padding-left: 3px;
	}

	.prompt input::placeholder {
		color: #555a60;
	}

	.ime {
		position: absolute;
		right: 2px;
		bottom: 92px;
		display: flex;
		align-items: center;
		justify-content: space-around;
		width: 61px;
		height: 19px;
		border-radius: 3px;
		background: #fff;
		color: #1c1c1c;
		font-size: 10px;
	}

	.ime svg {
		width: 14px;
		height: 14px;
		fill: none;
		stroke: #f4701f;
		stroke-width: 3;
	}

	/* status bar */
	footer {
		height: 18px;
		border-top: 2px solid var(--panel);
	}

	footer .sheet-tab {
		margin: 0 0 2px 4px;
		padding: 0 9px;
	}

	footer .slash {
		margin: 4px 1px;
	}

	.status {
		display: flex;
		align-items: center;
		margin-left: auto;
		padding-right: 1px;
	}

	.status-item,
	.model-space,
	.status-caret {
		display: flex;
		align-items: center;
		justify-content: center;
		height: 14px;
		background: #2e3541;
	}

	.status-item {
		width: 15px;
	}

	.status-caret {
		width: 9px;
	}

	.model-space {
		width: 22px;
		color: #fff;
	}

	.gap {
		margin-left: 3px;
	}

	.on {
		background: #4f86bb;
	}
</style>
